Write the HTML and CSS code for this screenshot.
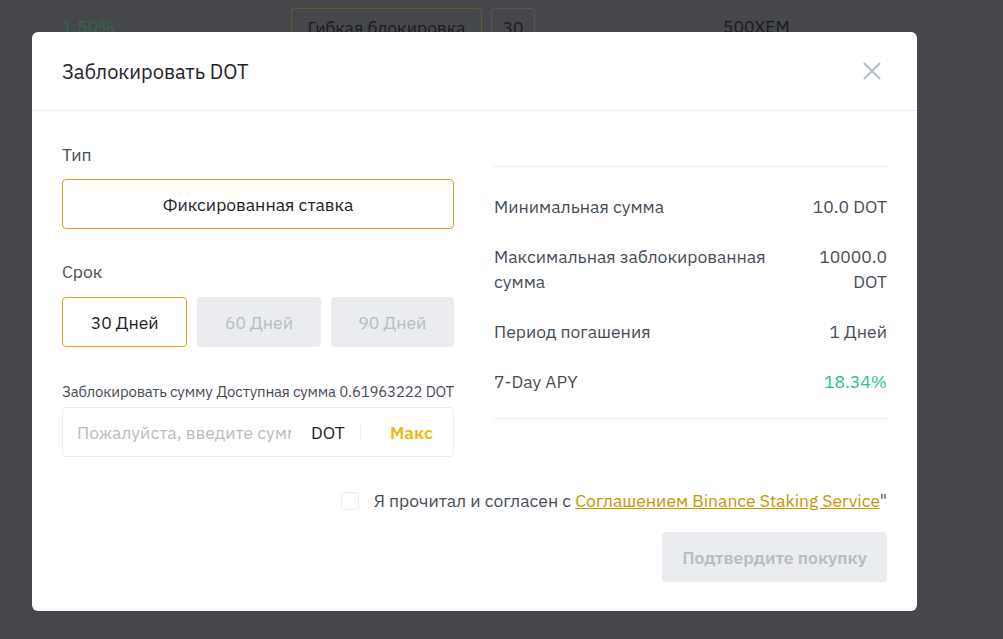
FILE: index.html
```html
<!DOCTYPE html>
<html lang="ru">
<head>
<meta charset="utf-8">
<title>Заблокировать DOT</title>
<link rel="stylesheet" href="styles.css">
</head>
<body>
<div class="page">
  <div class="bg-row">
    <span class="bg-rate">1.50%</span>
    <span class="bg-type">Гибкая блокировка</span>
    <span class="bg-days">30</span>
    <span class="bg-min">500XEM</span>
  </div>
</div>

<div class="modal">
  <div class="modal-head">
    <h2 class="modal-title">Заблокировать DOT</h2>
    <button class="close" aria-label="Закрыть">
      <svg width="20" height="20" viewBox="0 0 20 20"><path d="M2.5 2.5 L17.5 17.5 M17.5 2.5 L2.5 17.5" stroke="#b7bdc6" stroke-width="2" fill="none" stroke-linecap="round"/></svg>
    </button>
  </div>
  <div class="modal-body">
    <div class="cols">
      <div class="col-left">
        <div class="label">Тип</div>
        <div class="type-btn">Фиксированная ставка</div>
        <div class="label label-term">Срок</div>
        <div class="terms">
          <div class="term active">30 Дней</div>
          <div class="term">60 Дней</div>
          <div class="term">90 Дней</div>
        </div>
        <div class="amount-head">
          <span>Заблокировать сумму</span>
          <span>Доступная сумма 0.61963222 DOT</span>
        </div>
        <div class="amount-input">
          <span class="placeholder">Пожалуйста, введите сумму</span>
          <span class="unit">DOT</span>
          <span class="divider"></span>
          <span class="max">Макс</span>
        </div>
      </div>
      <div class="col-right">
        <div class="info">
          <div class="info-row"><span class="info-label">Минимальная сумма</span><span class="info-val">10.0 DOT</span></div>
          <div class="info-row"><span class="info-label">Максимальная заблокированная сумма</span><span class="info-val">10000.0 DOT</span></div>
          <div class="info-row"><span class="info-label">Период погашения</span><span class="info-val">1 Дней</span></div>
          <div class="info-row"><span class="info-label">7-Day APY</span><span class="info-val green">18.34%</span></div>
        </div>
      </div>
    </div>
    <div class="agree">
      <span class="checkbox"></span>
      <span class="agree-text">Я прочитал и согласен с <a href="#" class="link">Соглашением Binance Staking Service</a>"</span>
    </div>
    <div class="actions">
      <button class="confirm">Подтвердите покупку</button>
    </div>
  </div>
</div>
</body>
</html>
```

FILE: styles.css
```css
* { box-sizing: border-box; }
html, body { margin: 0; padding: 0; }
body {
  width: 1003px;
  height: 639px;
  overflow: hidden;
  background: #46474b;
  font-family: "IBM Plex Sans", "Noto Sans", Roboto, "Liberation Sans", sans-serif;
  color: #1e2329;
  position: relative;
}
.page { height: 639px; }
.bg-row {
  display: flex;
  align-items: flex-start;
  padding-top: 8px;
  font-size: 17.5px;
  color: #1b1c1f;
}
.bg-rate { margin-left: 62px; width: 229px; margin-top: 7px; color: #2a6a4b; }
.bg-type {
  border: 1px solid #635734;
  border-radius: 3px;
  width: 191px;
  text-align: center;
  height: 44px;
  line-height: 38px;
}
.bg-days {
  margin-left: 9px;
  width: 44px;
  text-align: center;
  border: 1px solid #55565b;
  border-radius: 3px;
  height: 44px;
  line-height: 38px;
}
.bg-min { margin-left: 188px; margin-top: 7px; }

.modal {
  position: absolute;
  left: 32px;
  top: 32px;
  width: 885px;
  height: 579px;
  background: #fff;
  border-radius: 6px;
}
.modal-head {
  height: 79px;
  border-bottom: 1px solid #eaecef;
  display: flex;
  align-items: center;
  justify-content: space-between;
  padding: 0 30px;
}
.modal-title {
  margin: 0;
  font-size: 20px;
  font-weight: 400;
  color: #1e2329;
}
.close {
  border: 0;
  background: none;
  padding: 0;
  width: 20px;
  height: 20px;
  margin-right: 5px;
  cursor: pointer;
}
.modal-body { padding: 32px 30px 29px; }
.cols {
  display: flex;
  gap: 40px;
}
.col-left { width: 392px; }
.col-right { flex: 1; padding-top: 23px; }
.label {
  font-size: 17.5px;
  line-height: 24px;
  color: #474d57;
  margin-bottom: 12px;
}
.label-term { margin-top: 31px; margin-bottom: 13px; }
.type-btn {
  height: 50px;
  border: 1px solid #d9a521;
  border-radius: 4px;
  display: flex;
  align-items: center;
  justify-content: center;
  font-size: 17.5px;
  color: #1e2329;
}
.terms { display: flex; gap: 10px; }
.term {
  flex: 1;
  height: 50px;
  border-radius: 4px;
  background: #eaecef;
  color: #b7bdc6;
  display: flex;
  align-items: center;
  justify-content: center;
  font-size: 17.5px;
}
.term.active {
  background: #fff;
  border: 1px solid #d9a521;
  color: #1e2329;
}
.amount-head {
  margin-top: 35px;
  display: flex;
  justify-content: space-between;
  font-size: 15px;
  line-height: 20px;
  color: #474d57;
  letter-spacing: -0.2px;
  white-space: nowrap;
}
.amount-input {
  margin-top: 5px;
  height: 50px;
  border: 1px solid #eaecef;
  border-radius: 4px;
  display: flex;
  align-items: center;
  padding: 0 20px 0 14px;
  font-size: 17.5px;
}
.placeholder {
  width: 214px;
  flex-shrink: 0;
  overflow: hidden;
  white-space: nowrap;
  color: #b7bdc6;
}
.unit { margin-left: 20px; color: #1e2329; }
.divider {
  width: 1px;
  height: 16px;
  background: #eaecef;
  margin-left: 15px;
}
.max {
  margin-left: auto;
  color: #f0b90b;
  font-weight: 600;
}
.info {
  border-top: 1px solid #eaecef;
  border-bottom: 1px solid #eaecef;
  padding: 27px 0 24px;
  display: flex;
  flex-direction: column;
  gap: 25px;
}
.info-row {
  display: flex;
  justify-content: space-between;
  gap: 40px;
  font-size: 17.5px;
  line-height: 25px;
  color: #474d57;
}
.info-val { max-width: 80px; text-align: right; }
.green { color: #2ebd85; }
.agree {
  margin-top: 32px;
  display: flex;
  align-items: center;
  justify-content: flex-end;
  font-size: 17.5px;
  color: #474d57;
}
.checkbox {
  width: 18px;
  height: 18px;
  border: 1px solid #eaecef;
  border-radius: 3px;
  margin-right: 15px;
}
.link { color: #c99400; text-decoration: underline; }
.actions {
  margin-top: 20px;
  display: flex;
  justify-content: flex-end;
}
.confirm {
  width: 225px;
  height: 50px;
  border: 0;
  border-radius: 4px;
  background: #eaecef;
  color: #b7bdc6;
  font-family: inherit;
  font-size: 17.5px;
  font-weight: 600;
}
```
